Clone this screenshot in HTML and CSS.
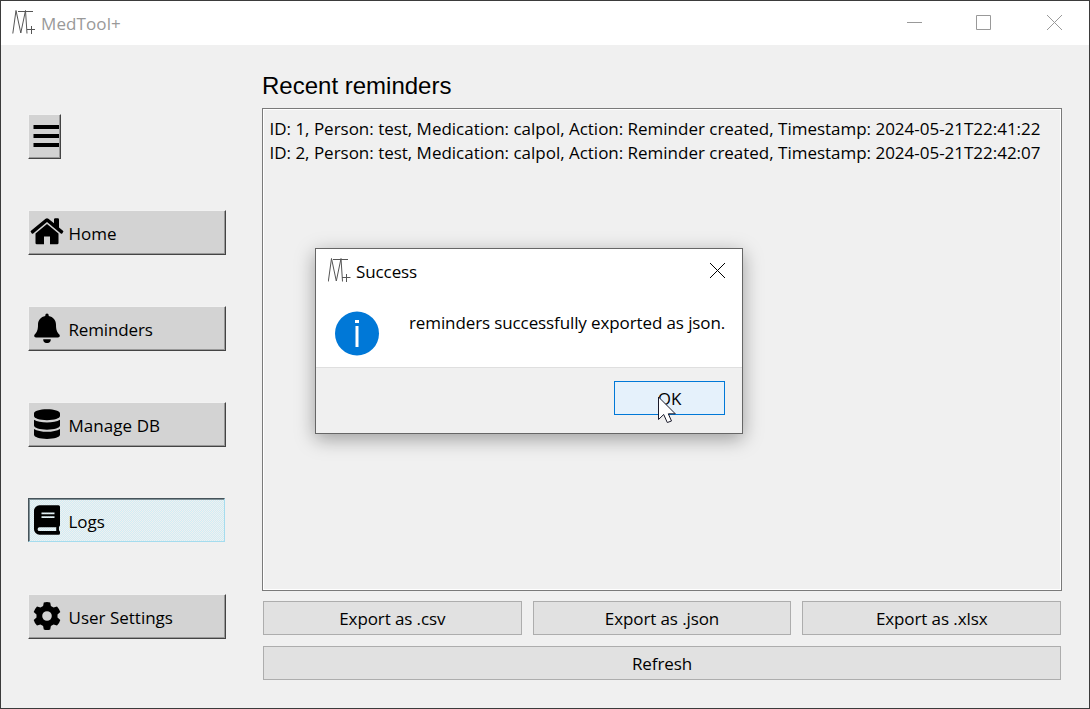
FILE: index.html
```html
<!DOCTYPE html>
<html lang="en">
<head>
<meta charset="utf-8">
<title>MedTool+</title>
<link rel="stylesheet" href="styles.css">
</head>
<body>
<div class="window">
  <header class="titlebar">
    <svg class="logo" width="24" height="26" viewBox="0 0 24 26"><path d="M.8 24.500 4 1.500 8.800 24 13.500 1.500 15 24.500M6 2.500H21M19.500 17V25M15 20.500H23"/></svg>
    <span class="app-title">MedTool+</span>
    <div class="controls">
      <svg width="15" height="16" viewBox="0 0 15 16"><path d="M0 7.500H15"/></svg>
      <svg class="maximize" width="15" height="16" viewBox="0 0 15 16"><path d="M.5.500H14.500V14.500H.5Z"/></svg>
      <svg width="15" height="16" viewBox="0 0 15 16"><path d="M0 0 15 15M15 0 0 15"/></svg>
    </div>
  </header>
  <div class="content">
    <nav class="sidebar">
      <button class="nav-button menu-button"><svg class="icon" width="26" height="24" viewBox="0 0 26 24"><path d="M.5 1h25.500v4H.5zM.5 10h25.500v4H.5zM.5 19h25.500v4H.5z"/></svg></button>
      <button class="nav-button"><svg class="icon" width="34" height="30" viewBox="0 0 34 30"><path d="M5.500 16.500 17 7 28.500 16.500V26a1.300 1.300 0 0 1-1.300 1.300H20V19.500H14V27.300H6.800A1.300 1.300 0 0 1 5.500 26Z"/><path d="M15.600 1.800a2.200 2.200 0 0 1 2.800 0L24 6.300V2.500q0-1.200 1.200-1.200h2.600q1.200 0 1.200 1.200V10.500L33 13.700q.8.700.2 1.400l-1 1.300q-.7.700-1.400.1L17 5.100 3.200 16.500q-.7.600-1.400-.1l-1-1.300q-.6-.7.200-1.400Z"/></svg><span>Home</span></button>
      <button class="nav-button"><svg class="icon" width="34" height="30" viewBox="0 0 34 30"><path d="M15.300 2.200a1.700 1.700 0 0 1 3.400 0v.9c4.500.9 7.300 4.300 7.300 8.600 0 5.400 1.200 7.600 3.300 9.800 1.100 1.200.2 2.900-1.300 2.900H6c-1.500 0-2.400-1.700-1.300-2.900C6.800 19.300 8 17.100 8 11.700c0-4.300 2.800-7.700 7.300-8.600ZM13.200 26.300h7.600a3.800 3.800 0 0 1-7.600 0Z"/></svg><span class="tight">Reminders</span></button>
      <button class="nav-button"><svg class="icon" width="34" height="30" viewBox="0 0 34 30"><path d="M4 4.500C4 2.200 9.800.3 17 .3s13 1.900 13 4.200v2.600c0 2.300-5.800 4.200-13 4.200S4 9.400 4 7.100ZM30 10.700V16.500c0 2.300-5.800 4.200-13 4.200S4 18.800 4 16.500V10.700c2.800 1.900 7.900 2.700 13 2.700s10.200-.8 13-2.700ZM30 20v5.700c0 2.300-5.800 4.200-13 4.200S4 28 4 25.700V20c2.800 1.900 7.900 2.800 13 2.800S27.200 21.900 30 20Z"/></svg><span class="loose">Manage DB</span></button>
      <button class="nav-button selected"><svg class="icon" width="34" height="30" viewBox="0 0 34 30"><path fill-rule="evenodd" d="M9.500.300H28.500Q30 .3 30 1.800V20q0 1-.8 1.500-.5 2.200 0 4.300.8.500.8 1.200v1.200q0 1.500-1.500 1.500H9.500A5.500 5.500 0 0 1 4 24.200V5.800A5.500 5.500 0 0 1 9.500.300ZM11.500 7.500v1.800h13v-1.800ZM11.500 11.200v1.800h13v-1.800ZM9.500 22.300a1.900 1.900 0 0 0 0 3.800H26.300q-.2-1.900 0-3.800Z"/></svg><span>Logs</span></button>
      <button class="nav-button"><svg class="icon" width="34" height="30" viewBox="0 0 34 30"><path fill-rule="evenodd" d="M13.800 1.500Q17 .5 20.200 1.500L20.900 5.100 23.500 6.600 27 5.400Q29.400 7.900 30.300 11.100L27.500 13.500V16.500L30.300 18.900Q29.400 22.100 27 24.600L23.500 23.400 20.900 24.900 20.200 28.500Q17 29.500 13.800 28.500L13.100 24.900 10.500 23.400 7 24.600Q4.600 22.100 3.700 18.900L6.500 16.500V13.500L3.700 11.100Q4.600 7.900 7 5.400L10.500 6.600 13.100 5.100ZM17 10.200a4.800 4.800 0 1 0 0 9.600a4.800 4.800 0 0 0 0-9.600Z"/></svg><span>User Settings</span></button>
    </nav>
    <main class="main">
      <h1>Recent reminders</h1>
      <div class="log">
        <div class="entry">ID: 1, Person: test, Medication: calpol, Action: Reminder created, Timestamp: 2024-05-21T22:41:22</div>
        <div class="entry">ID: 2, Person: test, Medication: calpol, Action: Reminder created, Timestamp: 2024-05-21T22:42:07</div>
      </div>
      <div class="exports">
        <button class="push">Export as .csv</button>
        <button class="push">Export as .json</button>
        <button class="push">Export as .xlsx</button>
      </div>
      <button class="push refresh">Refresh</button>
    </main>
  </div>
</div>
<section class="dialog" role="dialog">
  <header class="dialog-title">
    <svg class="logo" width="24" height="26" viewBox="0 0 24 26"><path d="M.3 24.500 3.500 1.500 8.300 24 13 1.500 14.500 24.500M5 2.500H20M18.500 17V25M14 20.500H22.500"/></svg>
    <span class="dialog-name">Success</span>
    <svg class="dialog-close" width="15" height="15" viewBox="0 0 15 15"><path d="M0 0 15 15M15 0 0 15"/></svg>
  </header>
  <div class="dialog-body">
    <svg class="info" width="45" height="45" viewBox="0 0 45 45"><circle cx="22" cy="22.500" r="22"/><path d="M20 9h4v3h-4zM20.500 15h3v21h-3z"/></svg>
    <p class="message">reminders successfully exported as json.</p>
  </div>
  <footer class="dialog-footer"><button class="push ok">OK</button></footer>
  <svg class="cursor" width="20" height="29" viewBox="0 0 20 29"><path d="M.5 2V24.500L5.700 19.500 9.300 27.500 13.500 26 10.300 18.800H17.300Z"/></svg>
</section>
</body>
</html>
```
FILE: styles.css
```css
* { box-sizing: border-box; }
body { margin: 0; font-family: "Open Sans", "Noto Sans", sans-serif; font-size: 17px; color: #000; }
button { font: inherit; color: inherit; padding: 0; margin: 0; border-radius: 0; }
span { white-space: nowrap; }
.window { width: 1090px; height: 709px; border: 1px solid #3b3b3b; background: #f0f0f0; display: flex; flex-direction: column; }
.titlebar { height: 44px; background: #fff; display: flex; align-items: center; padding-left: 11px; color: #999; }
.logo { fill: none; stroke: #555; stroke-width: 1; flex: none; margin-top: -3px; }
.app-title { margin-left: 5px; letter-spacing: .1px; }
.controls { margin-left: auto; display: flex; gap: 55px; padding-right: 27px; }
.controls svg { fill: none; stroke: #999; }
.controls .maximize { margin: 0 1px 0 -1px; }
.content { flex: 1; display: flex; }
.sidebar { width: 261px; padding: 69px 0 0 27px; display: flex; flex-direction: column; gap: 51px; }
.nav-button { width: 198px; height: 45px; border: 1px solid; border-color: #f2f2f2 #444 #444 #f2f2f2; box-shadow: inset -1px -1px #999; background: #d3d3d3; display: flex; align-items: center; gap: 5px; padding-left: .5px; }
.nav-button span { padding-top: 2px; }
.menu-button { width: 33px; padding-left: 4px; }
.selected {
  width: 197px;
  height: 44px;
  margin-bottom: 1px;
  border-color: #46535a #a5dcee #a5dcee #46535a;
  box-shadow: inset 1px 1px #7f9198;
  background: repeating-conic-gradient(#d0edf5 0 25%, #f0f0f0 0 50%) 0 0 / 2px 2px;
}
.icon { flex: none; margin-top: -1px; }
.tight { letter-spacing: -.15px; }
.loose { letter-spacing: .05px; }
.main { width: 800px; display: flex; flex-direction: column; }
h1 { margin: 25px 0 0; height: 38px; font: 24px/32px "Liberation Sans", sans-serif; }
.log { height: 483px; border: 1px solid #7a7a7a; box-shadow: inset 0 0 0 1px #fff; padding: 8px 6.5px; line-height: 24px; letter-spacing: -.015px; }
.entry { white-space: nowrap; }
.exports { display: flex; gap: 11px; margin: 10px 1px 11px; }
.push { flex: 1; height: 34px; background: #e1e1e1; border: 1px solid #adadad; display: flex; align-items: center; justify-content: center; letter-spacing: -.1px; }
.refresh { flex: none; margin: 0 1px; }
.dialog { position: absolute; left: 315px; top: 248px; width: 428px; height: 186px; border: 1px solid #666; background: #fff; box-shadow: 0 5px 18px rgba(0,0,0,.35); display: flex; flex-direction: column; }
.dialog-title { height: 44px; display: flex; align-items: center; padding: 0 17px 0 12px; }
.dialog-name { margin-left: 4px; letter-spacing: -.1px; }
.dialog-close { margin: -1px 0 0 auto; fill: none; stroke: #000; }
.dialog-body { height: 74px; display: flex; padding: 18px 0 0 19px; }
.info { flex: none; }
.message { margin: 0 0 0 29px; line-height: 24px; letter-spacing: -.11px; white-space: nowrap; }
.info circle { fill: #0078d7; }
.info path { fill: #fff; }
.dialog-footer { flex: 1; background: #f0f0f0; border-top: 1px solid #dfdfdf; padding: 13px 17px; display: flex; justify-content: flex-end; }
.ok { flex: none; width: 111px; background: #e5f1fb; border-color: #0078d7; }
.cursor { position: absolute; left: 342px; top: 146px; fill: #fff; stroke: #1a1a2a; }
```
